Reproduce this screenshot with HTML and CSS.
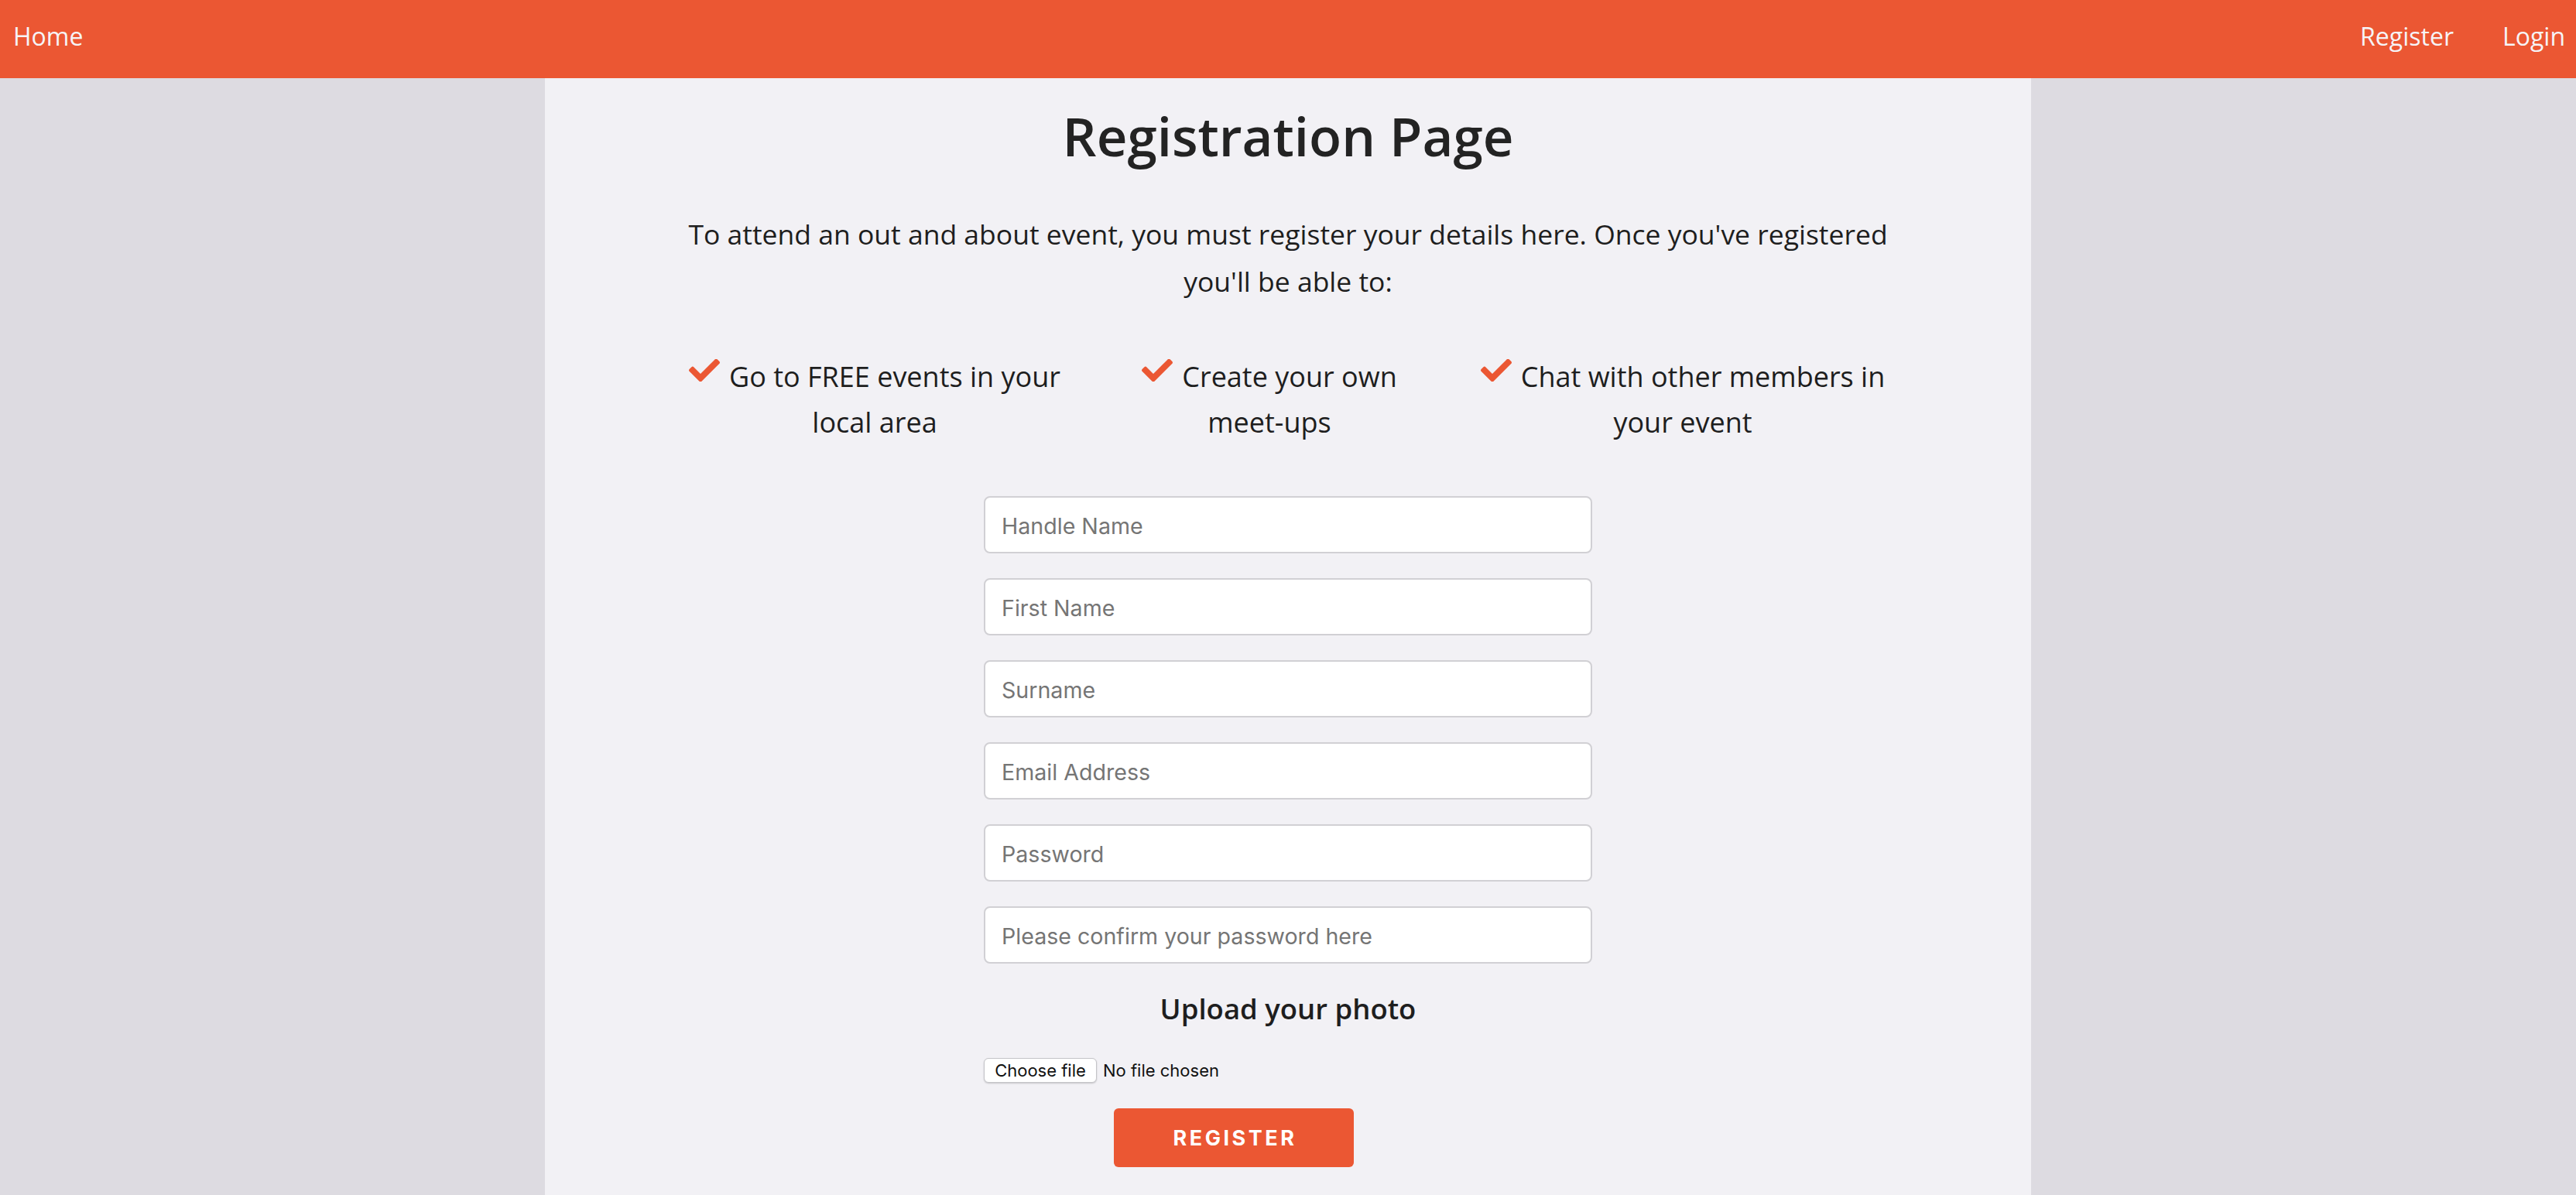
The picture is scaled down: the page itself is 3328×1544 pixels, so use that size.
FILE: index.html
```html
<!DOCTYPE html>
<html lang="en">
<head>
<meta charset="utf-8">
<title>Registration Page</title>
<link rel="stylesheet" href="styles.css">
</head>
<body>
<nav class="topbar">
  <a class="topbar__link" href="#">Home</a>
  <div class="topbar__right">
    <a class="topbar__link" href="#">Register</a>
    <a class="topbar__link" href="#">Login</a>
  </div>
</nav>
<main class="page">
  <h1 class="page__title">Registration Page</h1>
  <p class="intro">To attend an out and about event, you must register your details here. Once you've registered you'll be able to:</p>
  <ul class="features">
    <li class="feature feature--a"><svg class="check" viewBox="0 72 512 368" aria-hidden="true"><path d="M173.898 439.404l-166.4-166.4c-9.997-9.997-9.997-26.206 0-36.204l36.203-36.204c9.997-9.998 26.207-9.998 36.204 0L192 312.69 432.095 72.596c9.997-9.997 26.207-9.997 36.204 0l36.203 36.204c9.997 9.997 9.997 26.206 0 36.204l-294.4 294.401c-9.998 9.997-26.207 9.997-36.204-.001z"/></svg>Go to FREE events in your local area</li>
    <li class="feature feature--b"><svg class="check" viewBox="0 72 512 368" aria-hidden="true"><path d="M173.898 439.404l-166.4-166.4c-9.997-9.997-9.997-26.206 0-36.204l36.203-36.204c9.997-9.998 26.207-9.998 36.204 0L192 312.69 432.095 72.596c9.997-9.997 26.207-9.997 36.204 0l36.203 36.204c9.997 9.997 9.997 26.206 0 36.204l-294.4 294.401c-9.998 9.997-26.207 9.997-36.204-.001z"/></svg>Create your own meet-ups</li>
    <li class="feature feature--c"><svg class="check" viewBox="0 72 512 368" aria-hidden="true"><path d="M173.898 439.404l-166.4-166.4c-9.997-9.997-9.997-26.206 0-36.204l36.203-36.204c9.997-9.998 26.207-9.998 36.204 0L192 312.69 432.095 72.596c9.997-9.997 26.207-9.997 36.204 0l36.203 36.204c9.997 9.997 9.997 26.206 0 36.204l-294.4 294.401c-9.998 9.997-26.207 9.997-36.204-.001z"/></svg>Chat with other members in your event</li>
  </ul>
  <form class="form" onsubmit="return false;">
    <input class="field" type="text" placeholder="Handle Name">
    <input class="field" type="text" placeholder="First Name">
    <input class="field" type="text" placeholder="Surname">
    <input class="field" type="email" placeholder="Email Address">
    <input class="field" type="password" placeholder="Password">
    <input class="field" type="password" placeholder="Please confirm your password here">
    <h3 class="upload-title">Upload your photo</h3>
    <label class="file">
      <input class="file__input" type="file">
      <span class="file__btn">Choose file</span>
      <span class="file__name">No file chosen</span>
    </label>
    <div class="form__actions">
      <button class="submit" type="submit">REGISTER</button>
    </div>
  </form>
</main>
</body>
</html>
```

FILE: styles.css
```css
* { box-sizing: border-box; }

html, body {
  margin: 0;
  padding: 0;
}

body {
  background: #dddbe1;
  font-family: "Open Sans", "DejaVu Sans", sans-serif;
  color: #222222;
  min-height: 100vh;
}

.topbar {
  display: flex;
  justify-content: space-between;
  align-items: flex-start;
  height: 101px;
  padding: 25px 14px 0 17px;
  background: #eb5733;
}

.topbar__link {
  color: #f6f4f7;
  text-decoration: none;
  font-size: 32px;
  line-height: 44px;
}

.topbar__right {
  display: flex;
  gap: 63px;
}

.page {
  width: 1920px;
  margin: 0 auto;
  min-height: calc(100vh - 101px);
  background: #f2f1f5;
  padding: 32px 0 40px;
}

.page__title {
  margin: 0;
  text-align: center;
  font-size: 69px;
  line-height: 84px;
  font-weight: 600;
  color: #232323;
}

.intro {
  max-width: 1590px;
  margin: 55px auto 0;
  text-align: center;
  font-size: 35.5px;
  line-height: 61px;
  color: #1e1e1e;
}

.features {
  list-style: none;
  margin: 63px 0 0;
  padding: 0;
  display: flex;
  justify-content: center;
  gap: 80px;
}

.feature {
  text-align: center;
  font-size: 36px;
  line-height: 59px;
  color: #1e1e1e;
}

.feature--a { width: 500px; }
.feature--b { width: 360px; }
.feature--c { width: 548px; }

.check {
  width: 40px;
  height: 29px;
  fill: #eb5733;
  margin-right: 12px;
  vertical-align: 7px;
}

.form {
  width: 786px;
  margin: 66px auto 0;
  display: flex;
  flex-direction: column;
}

.field {
  height: 74px;
  margin: 0 0 32px;
  padding: 2px 21px 0;
  border: 2px solid #d1d0d4;
  border-radius: 8px;
  background: #ffffff;
  font-family: Inter, "Liberation Sans", sans-serif;
  font-size: 28.6px;
  color: #222;
}

.field:last-of-type { margin-bottom: 0; }

.field::placeholder {
  color: #757575;
}

.upload-title {
  margin: 32px 0 0;
  text-align: center;
  font-size: 36.5px;
  line-height: 52px;
  font-weight: 600;
  color: #1e1e1e;
}

.file {
  display: flex;
  align-items: center;
  gap: 8px;
  margin-top: 38px;
  height: 32px;
  font-family: Inter, "Liberation Sans", sans-serif;
  font-size: 22px;
  color: #111;
}

.file__input {
  display: none;
}

.file__btn {
  display: flex;
  align-items: center;
  justify-content: center;
  width: 146px;
  height: 32px;
  background: #ffffff;
  border: 1px solid #c4c4c8;
  border-radius: 6px;
  box-shadow: 0 1px 2px rgba(0, 0, 0, 0.18);
}

.form__actions {
  margin-top: 33px;
  padding-left: 168px;
}

.submit {
  width: 310px;
  height: 76px;
  border: none;
  border-radius: 6px;
  background: #eb5733;
  color: #ffffff;
  font-family: Inter, "Liberation Sans", sans-serif;
  font-weight: 700;
  font-size: 27px;
  letter-spacing: 3.5px;
  padding: 0 0 0 3px;
  cursor: pointer;
}
```
